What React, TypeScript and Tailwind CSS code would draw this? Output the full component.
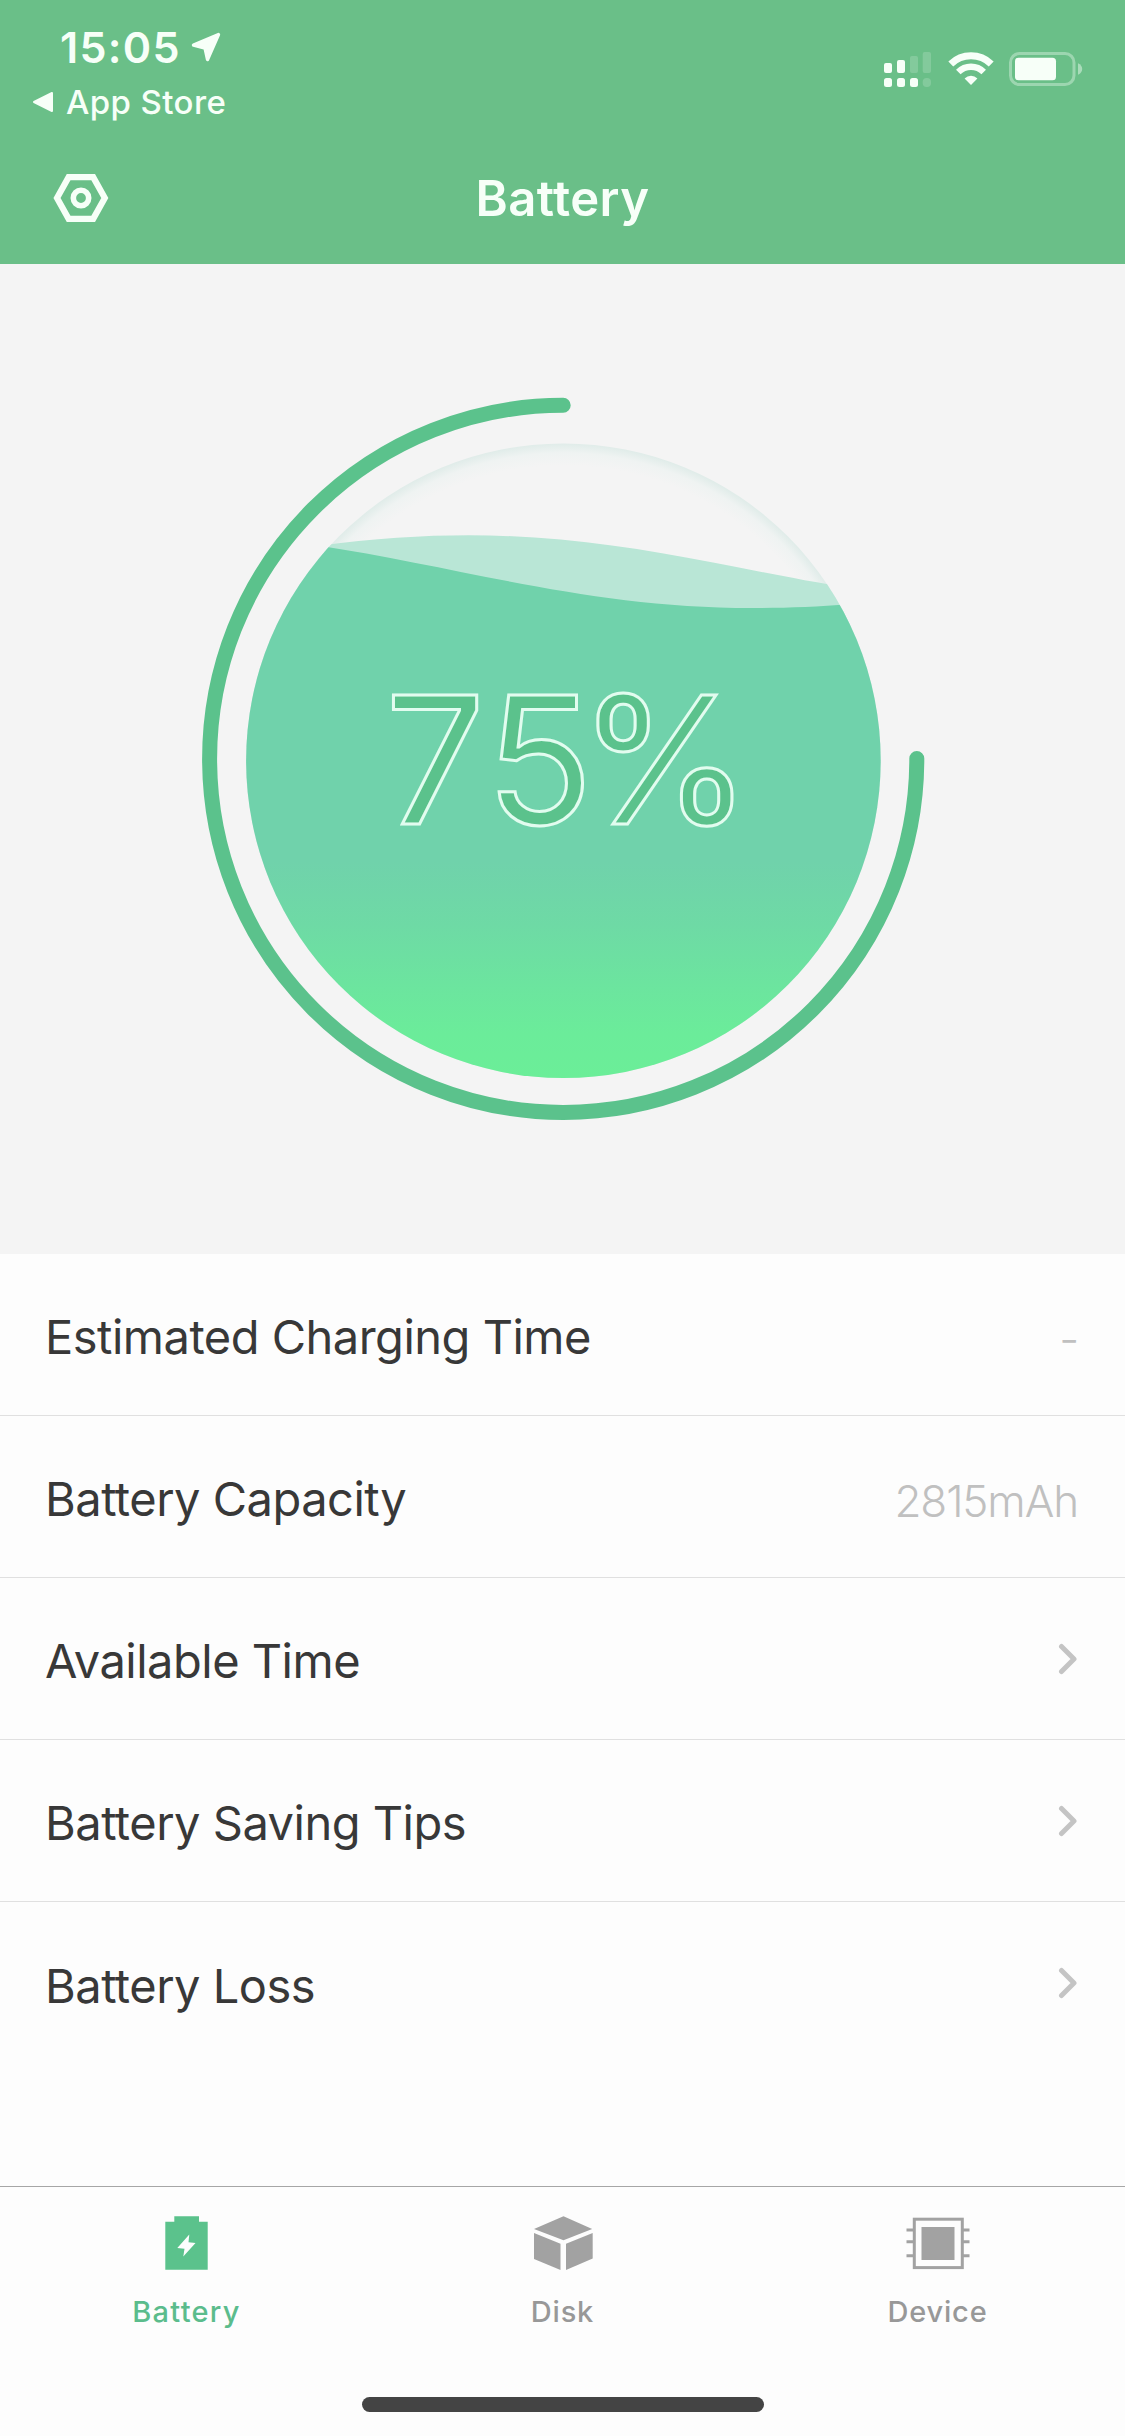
import React from "react";

interface RowItem {
  label: string;
  value?: string;
}

const ROWS: RowItem[] = [
  { label: "Estimated Charging Time", value: "-" },
  { label: "Battery Capacity", value: "2815mAh" },
  { label: "Available Time" },
  { label: "Battery Saving Tips" },
  { label: "Battery Loss" },
];

function StatusBar() {
  return (
    <div className="flex justify-between h-[132px] pl-[32px] pr-[42px]">
      <div className="pt-[21px]">
        <div className="flex items-center h-[52px] pl-[28px]">
          <span className="w-[122px] text-[43px] leading-[52px] font-semibold tracking-[1.3px] whitespace-nowrap">15:05</span>
          <svg width="32" height="32" viewBox="0 0 32 32" className="ml-[8px] shrink-0">
            <path d="M28.5 3.5 L3.5 14 L15 17 L17.5 28.5 Z" fill="currentColor" stroke="currentColor" strokeWidth="3.4" strokeLinejoin="round" />
          </svg>
        </div>
        <div className="flex items-center h-[40px] mt-[9px]">
          <svg width="22" height="22" viewBox="0 0 22 22" className="shrink-0">
            <path d="M2 11 L20 2 V20 Z" fill="currentColor" stroke="currentColor" strokeWidth="2" strokeLinejoin="round" />
          </svg>
          <span className="ml-[12px] text-[33px] leading-[40px] font-medium tracking-[0.4px] whitespace-nowrap">App Store</span>
        </div>
      </div>

      <div className="flex items-start pt-[52px]">
        <svg width="48" height="36" viewBox="0 0 48 36" fill="currentColor">
          <rect x="0" y="11" width="8" height="10" rx="2" />
          <rect x="13" y="8" width="8" height="13" rx="2" />
          <rect x="26" y="4" width="8" height="17" rx="2" opacity="0.18" />
          <rect x="38.7" y="0" width="8.3" height="21" rx="2" opacity="0.18" />
          <rect x="0" y="26" width="8" height="9" rx="2.5" />
          <rect x="13" y="26" width="8" height="9" rx="2.5" />
          <rect x="26" y="26" width="8" height="9" rx="2.5" />
          <rect x="38.7" y="26" width="8.3" height="9" rx="4" opacity="0.18" />
        </svg>
        <svg width="46" height="34" viewBox="0 0 46 34" fill="none" stroke="currentColor" className="ml-[16px]">
          <path d="M2.8 12 A29 29 0 0 1 43.2 12" strokeWidth="7" />
          <path d="M10.3 20 A18 18 0 0 1 35.7 20" strokeWidth="6.4" />
          <path d="M23 33 L16.6 26.4 A9.2 9.2 0 0 1 29.4 26.4 Z" fill="currentColor" stroke="none" />
        </svg>
        <svg width="74" height="34" viewBox="0 0 74 34" className="ml-[15px]">
          <rect x="1.5" y="1.5" width="63.5" height="31" rx="9" fill="none" stroke="currentColor" strokeWidth="3" opacity="0.36" />
          <rect x="6" y="5.7" width="41" height="22.5" rx="3.5" fill="currentColor" />
          <path d="M69 11.3 C74.6 13.5 74.6 20.5 69 22.7 Z" fill="currentColor" opacity="0.45" />
        </svg>
      </div>
    </div>
  );
}

function Header() {
  return (
    <header className="h-[264px] shrink-0 bg-[#6abf88] text-[#f7fff8]">
      <StatusBar />
      <div className="grid grid-cols-[1fr_auto_1fr] items-center h-[132px] px-[53px]">
        <svg width="56" height="50" viewBox="0 0 56 50" fill="none" stroke="currentColor">
          <path d="M15.6 4.2 H40.2 L51.8 25 L40.2 45.8 H15.6 L4 25 Z" strokeWidth="6.2" />
          <circle cx="28" cy="25" r="7.7" strokeWidth="5.6" />
        </svg>
        <h1 className="pt-[2px] text-[49px] leading-[60px] font-semibold tracking-[0.4px]">Battery</h1>
      </div>
    </header>
  );
}

function BatteryGauge() {
  return (
    <section className="flex justify-center h-[990px] shrink-0 pt-[127px] bg-[#f4f4f4]">
      <svg width="736" height="736" viewBox="195 391 736 736">
        <defs>
          <linearGradient id="liquid" x1="0" y1="443" x2="0" y2="1078" gradientUnits="userSpaceOnUse">
            <stop offset="0.66" stopColor="#70d2ab" />
            <stop offset="0.76" stopColor="#6edaa5" />
            <stop offset="0.85" stopColor="#6ce49f" />
            <stop offset="0.93" stopColor="#6bec9a" />
            <stop offset="1" stopColor="#6bee98" />
          </linearGradient>
          <radialGradient id="glass" cx="563.4" cy="760.7" r="317.3" gradientUnits="userSpaceOnUse">
            <stop offset="0.93" stopColor="#f4f4f4" />
            <stop offset="0.97" stopColor="#eff3f2" />
            <stop offset="1" stopColor="#e0ece9" />
          </radialGradient>
          <clipPath id="bowl">
            <circle cx="563.4" cy="760.7" r="317.3" />
          </clipPath>
        </defs>

        <path d="M563.2 405.3 A353.6 353.6 0 1 0 916.8 758.5" fill="none" stroke="#5bc28c" strokeWidth="15" strokeLinecap="round" />

        <circle cx="563.4" cy="760.7" r="317.3" fill="url(#glass)" />
        <g clipPath="url(#bowl)">
          {/* back wave */}
          <path d="M318 546 C480 524 590 539 713 562.5 C760 571.5 800 580 850 588 V640 H318 Z" fill="#b9e6d6" />
          {/* front wave */}
          <path d="M318 545.5 C460 567 590 608 752 608 C785 608 815 607 850 604 H900 V1090 H230 V545.5 Z" fill="url(#liquid)" />
        </g>

        <text
          x="385"
          y="823.5"
          dx="0 2 -15"
          className="font-['Inter',sans-serif] text-[177px] font-normal"
          fill="#5bc28c"
          stroke="#e2fcef"
          strokeWidth="3"
        >
          75%
        </text>
      </svg>
    </section>
  );
}

function ChevronIcon() {
  return (
    <svg width="20" height="32" viewBox="0 0 20 32" fill="none" stroke="#c4c4c4" strokeWidth="5" strokeLinecap="round" strokeLinejoin="round">
      <path d="M3.5 3.5 L16 16 L3.5 28.5" />
    </svg>
  );
}

function InfoRow({ label, value }: RowItem) {
  return (
    <li className="flex items-center justify-between h-[162px] pl-[45px] pr-[47px] border-b border-[#e0e0e0] last:border-b-0">
      <span className="text-[47px] leading-[60px] text-[#383838] tracking-[-0.5px] pt-[5px]">{label}</span>
      {value ? (
        <span className="text-[44px] leading-[60px] font-light text-[#c0c0c0] tracking-[-1.1px] pt-[8px]">{value}</span>
      ) : (
        <ChevronIcon />
      )}
    </li>
  );
}

function BatteryIcon() {
  return (
    <svg width="66" height="56" viewBox="0 0 66 56">
      <path d="M19.3 1.3 H44 V6.7 H52.7 V54.7 H10.3 V6.7 H19.3 Z" fill="#5bc28c" />
      <path d="M34.3 19.5 L22.3 33 L29.5 33.8 L28.3 41.5 L40.5 28 L33.5 27.3 Z" fill="#fdfdfd" />
    </svg>
  );
}

function DiskIcon() {
  return (
    <svg width="66" height="56" viewBox="0 0 66 56" fill="#a2a2a2">
      <path d="M33.5 1.3 L62.2 14 L33.5 25.3 L4 14 Z" />
      <path d="M4 18 L30.5 28.7 V55 L4 44 Z" />
      <path d="M36 28.7 L62.7 18 V43.5 L36 55 Z" />
    </svg>
  );
}

function DeviceIcon() {
  return (
    <svg width="66" height="56" viewBox="0 0 66 56" fill="none" stroke="#a2a2a2" strokeWidth="3">
      <rect x="9.3" y="4.2" width="48" height="48.4" />
      <rect x="16.5" y="12" width="33" height="33" fill="#a2a2a2" stroke="none" />
      <path d="M1.5 15 H9 M1.5 26.7 H9 M1.5 40.7 H9 M58 15 H64.5 M58 26.7 H64.5 M58 40.7 H64.5" />
    </svg>
  );
}

const TABS = [
  { label: "Battery", icon: BatteryIcon, active: true },
  { label: "Disk", icon: DiskIcon, active: false },
  { label: "Device", icon: DeviceIcon, active: false },
];

function TabBar() {
  return (
    <nav className="grid grid-cols-3 h-[182px] shrink-0 pt-[28px] border-t border-[#a6a6a6]">
      {TABS.map(({ label, icon: Icon, active }) => (
        <button key={label} type="button" className="flex flex-col items-center">
          <Icon />
          <span
            className={`mt-[23px] text-[29px] leading-[36px] font-medium ${
              active ? "text-[#5bbc8c] tracking-[1.3px] pr-[2px]" : "text-[#989898] tracking-[0.8px]"
            }`}
          >
            {label}
          </span>
        </button>
      ))}
    </nav>
  );
}

export default function App() {
  return (
    <div className="flex flex-col w-[1125px] h-[2436px] overflow-hidden bg-[#fdfdfd] font-['Inter','Liberation_Sans',sans-serif]">
      <Header />
      <BatteryGauge />
      <ul className="flex-1">
        {ROWS.map((row) => (
          <InfoRow key={row.label} label={row.label} value={row.value} />
        ))}
      </ul>
      <TabBar />
      <div className="flex justify-center h-[68px] shrink-0 pt-[29px]">
        <div className="w-[402px] h-[15px] rounded-full bg-[#444444]" />
      </div>
    </div>
  );
}
